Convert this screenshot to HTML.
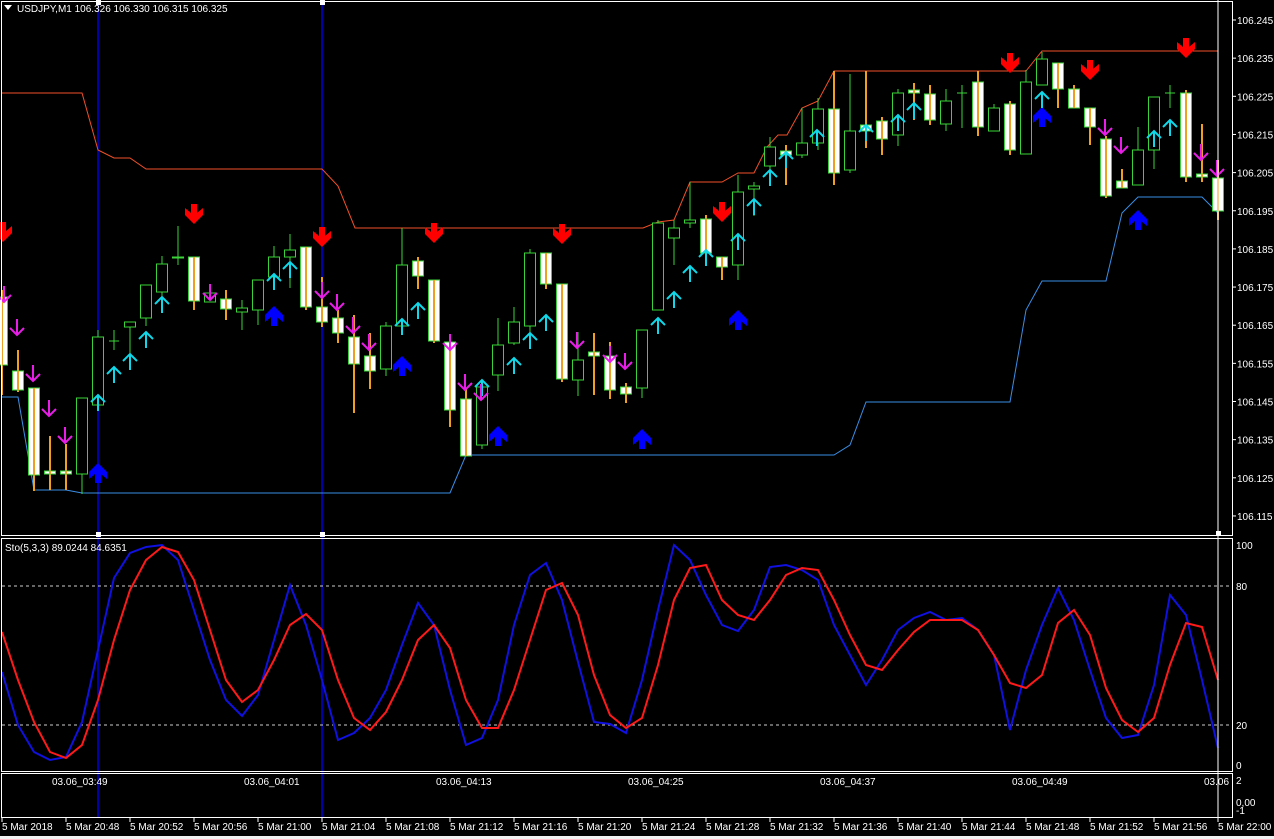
<!DOCTYPE html>
<html><head><meta charset="utf-8"><style>
html,body{margin:0;padding:0;background:#000;width:1274px;height:839px;overflow:hidden}
svg{display:block}
text{font-family:"Liberation Sans",sans-serif;font-size:10px;fill:#fff}
</style></head><body>
<svg id="s" width="1274" height="839" viewBox="0 0 1274 839" xmlns="http://www.w3.org/2000/svg">
<rect width="1274" height="839" fill="#000"/>
<rect x="0" y="836" width="1274" height="3" fill="#f0f0f0"/>
<g id="g"></g>
<text x="17" y="12">USDJPY,M1  106.326 106.330 106.315 106.325</text>
<path d="M4 5 L12 5 L8 10 Z" fill="#fff"/>
<text x="5" y="551">Sto(5,3,3) 89.0244 84.6351</text>
</svg>
<script>
var g=document.getElementById('g'),h='';
function L(pts,c,w){h+='<polyline points="'+pts.map(function(p){return p.join(',')}).join(' ')+'" fill="none" stroke="'+c+'" stroke-width="'+(w||1)+'"/>';}
h+='<line x1="98" y1="0" x2="98" y2="817" stroke="#0000ff" stroke-width="1.3"/><line x1="322" y1="0" x2="322" y2="817" stroke="#0000ff" stroke-width="1.3"/>';
L([[2,93],[82,93],[98,150],[114,158],[130,158],[146,169],[322,169],[338,186],[355,228],[643,228],[658,222],[674,220],[690,182],[722,182],[738,173],[754,173],[767,147],[778,135],[787,135],[802,108],[818,101],[834,71],[1026,71],[1042,51],[1218,51]],'#f05028');
L([[2,397],[18,397],[34,490],[66,490],[82,493],[450,493],[466,455],[834,455],[850,445],[866,402],[1010,402],[1026,310],[1042,281],[1106,281],[1122,213],[1138,197],[1202,197],[1218,213]],'#3a8ee6');
var C=[[297,365,290,395],[371,390,350,392],[388,475,388,491],[471,474,436,490],[471,474,444,490],[474,398,398,494],[405,337,330,410],[341,341,330,350],[327,322,322,360],[318,285,285,326],[292,264,256,300],[258,257,226,265],[257,301,257,310],[302,293,285,302],[299,309,290,320],[312,308,300,330],[310,280,280,325],[277,257,246,288],[257,250,234,288],[247,307,247,310],[307,322,277,327],[318,333,310,343],[337,364,315,413],[356,371,333,389],[369,326,322,376],[326,265,228,335],[261,276,257,289],[280,341,280,343],[342,410,342,427],[399,456,389,456],[445,387,383,449],[375,345,318,391],[343,322,307,345],[326,253,249,345],[253,284,253,289],[284,379,284,382],[380,360,332,396],[352,356,333,395],[356,390,342,399],[387,394,383,403],[388,330,330,398],[310,223,220,310],[238,228,220,265],[223,220,182,228],[219,253,215,255],[257,267,257,280],[265,192,175,280],[189,186,182,216],[166,147,137,170],[151,155,145,185],[155,143,108,158],[143,109,98,150],[109,173,71,185],[170,131,74,173],[125,131,71,148],[121,139,117,155],[135,93,89,146],[90,93,83,120],[94,120,85,125],[124,101,89,131],[93,93,85,128],[82,127,71,136],[131,108,104,131],[104,150,101,155],[154,82,70,154],[85,59,52,85],[63,89,63,108],[89,108,85,108],[108,127,108,145],[139,196,136,198],[181,188,169,188],[185,150,127,185],[150,97,97,169],[93,93,85,108],[93,177,90,182],[174,177,124,182],[178,211,160,220]];
C.forEach(function(c,k){var x=2+16*k,o=c[0],cl=c[1],hi=c[2],lo=c[3];var t=Math.min(o,cl),b=Math.max(o,cl);
 var bear=cl>o;
 if(bear){h+='<line x1="'+x+'" y1="'+hi+'" x2="'+x+'" y2="'+lo+'" stroke="#f0a020" stroke-width="2"/>';
  h+='<rect x="'+(x-5.5)+'" y="'+t+'" width="11" height="'+Math.max(b-t,2)+'" fill="#fff" stroke="#3ad43a" stroke-width="1"/>';
  h+='<line x1="'+x+'" y1="'+t+'" x2="'+x+'" y2="'+b+'" stroke="#f0a020" stroke-width="2"/>';}
 else{h+='<line x1="'+x+'" y1="'+hi+'" x2="'+x+'" y2="'+lo+'" stroke="#3ad43a" stroke-width="1"/>';
  if(b-t<1)h+='<line x1="'+(x-5)+'" y1="'+t+'" x2="'+(x+5)+'" y2="'+t+'" stroke="#3ad43a"/>';
  else h+='<rect x="'+(x-5.5)+'" y="'+t+'" width="11" height="'+(b-t)+'" fill="#000" stroke="#3ad43a" stroke-width="1"/>';}
});
function bigDown(x,y){h+='<path d="M'+(x-3)+' '+y+'L'+(x+3)+' '+y+'L'+(x+3)+' '+(y+9)+'L'+(x+9)+' '+(y+4)+'L'+(x+9)+' '+(y+11)+'L'+x+' '+(y+20)+'L'+(x-9)+' '+(y+11)+'L'+(x-9)+' '+(y+4)+'L'+(x-3)+' '+(y+9)+'Z" fill="#ff0000"/>';}
function bigUp(x,y){h+='<path d="M'+(x-3)+' '+(y+20)+'L'+(x+3)+' '+(y+20)+'L'+(x+3)+' '+(y+11)+'L'+(x+9)+' '+(y+16)+'L'+(x+9)+' '+(y+9)+'L'+x+' '+y+'L'+(x-9)+' '+(y+9)+'L'+(x-9)+' '+(y+16)+'L'+(x-3)+' '+(y+11)+'Z" fill="#0000ff"/>';}
[[3,222],[194,204],[322,227],[434,223],[562,224],[722,202],[1010,53],[1090,60],[1186,38]].forEach(function(p){bigDown(p[0],p[1]);});
[[98,463],[274,306],[402,356],[498,426],[642,429],[738,310],[1042,107],[1138,210]].forEach(function(p){bigUp(p[0],p[1]);});
function sUp(x,y){h+='<path d="M'+x+' '+(y+8)+'L'+x+' '+(y-8)+'M'+(x-7)+' '+(y-1)+'L'+x+' '+(y-8)+'L'+(x+7)+' '+(y-1)+'" fill="none" stroke="#10d8e8" stroke-width="2"/>';}
function sDn(x,y){h+='<path d="M'+x+' '+(y-8)+'L'+x+' '+(y+8)+'M'+(x-7)+' '+(y+1)+'L'+x+' '+(y+8)+'L'+(x+7)+' '+(y+1)+'" fill="none" stroke="#e81ee8" stroke-width="2"/>';}
[[98,403],[114,375],[130,362],[146,340],[162,305],[274,282],[290,270],[402,327],[418,311],[482,388],[514,366],[530,341],[546,323],[658,326],[674,300],[690,274],[706,258],[738,242],[754,207],[770,178],[786,160],[817,138],[866,133],[898,123],[914,111],[1042,100],[1154,139],[1170,128]].forEach(function(p){sUp(p[0],p[1]);});
[[4,294],[17,327],[33,373],[49,408],[65,435],[210,292],[322,290],[337,302],[353,325],[369,342],[450,342],[465,382],[481,392],[577,340],[610,354],[625,361],[1105,127],[1121,145],[1201,152],[1217,168]].forEach(function(p){sDn(p[0],p[1]);});
h+='<line x1="2" y1="586" x2="1232" y2="586" stroke="#ccc" stroke-dasharray="3,3"/><line x1="2" y1="725" x2="1232" y2="725" stroke="#ccc" stroke-dasharray="3,3"/>';
var B=[672,725,752,760,757,722,650,578,553,547,545,560,610,660,700,716,695,640,585,625,680,740,733,718,690,645,603,625,690,745,738,700,625,575,563,600,662,722,724,733,680,610,545,560,595,625,631,610,567,565,570,580,625,655,685,660,630,618,612,620,618,630,655,730,670,625,588,620,670,718,738,735,685,595,615,680,748];
var R=[632,680,722,752,758,745,700,640,590,560,547,552,580,630,680,702,690,660,625,614,630,680,718,730,712,680,640,625,648,700,728,728,690,640,590,583,615,675,715,728,718,665,600,568,565,600,615,620,600,575,568,570,600,635,665,670,650,632,620,620,620,630,655,683,688,675,623,610,635,688,720,732,718,665,623,627,680];
L(B.map(function(v,k){return [2+16*k,v]}),'#1010e0',2);
L(R.map(function(v,k){return [2+16*k,v]}),'#ff1a1a',2);
h+='<rect x="1.5" y="1.5" width="1231" height="534" fill="none" stroke="#fff"/>';
h+='<rect x="1.5" y="538.5" width="1231" height="233" fill="none" stroke="#fff"/>';
h+='<rect x="1.5" y="773.5" width="1231" height="44" fill="none" stroke="#fff"/>';
h+='<line x1="1218" y1="0" x2="1218" y2="817" stroke="#fff"/>';
h+='<rect x="96" y="0" width="5" height="5" fill="#fff"/><rect x="320" y="0" width="5" height="5" fill="#fff"/><rect x="96" y="532" width="5" height="5" fill="#fff"/><rect x="320" y="532" width="5" height="5" fill="#fff"/><rect x="1216" y="531" width="5" height="5" fill="#fff"/>';
for(var i=0;i<14;i++){var y=20+i*38.15;var p=(106.245-i*0.01).toFixed(3);h+='<line x1="1233" y1="'+y+'" x2="1236" y2="'+y+'" stroke="#fff"/><text x="1237" y="'+(y+4)+'">'+p+'</text>';}
[[100,545],[80,586],[20,725],[0,765]].forEach(function(a){h+='<text x="1236" y="'+(a[1]+4)+'">'+a[0]+'</text>';});
h+='<text x="1236" y="784">2</text><text x="1236" y="806">0,00</text><text x="1236" y="814">-1</text>';
['03:49','04:01','04:13','04:25','04:37','04:49'].forEach(function(t,i){h+='<text x="'+(52+192*i)+'" y="785">03.06_'+t+'</text>';});
h+='<text x="1204" y="785">03.06</text>';
var tl=['20:48','20:52','20:56','21:00','21:04','21:08','21:12','21:16','21:20','21:24','21:28','21:32','21:36','21:40','21:44','21:48','21:52','21:56','22:00'];
h+='<text x="2" y="830">5 Mar 2018</text><line x1="2" y1="818" x2="2" y2="822" stroke="#fff"/>';
tl.forEach(function(t,i){var x=66+64*i;h+='<line x1="'+x+'" y1="818" x2="'+x+'" y2="822" stroke="#fff"/><text x="'+x+'" y="830">5 Mar '+t+'</text>';});
g.innerHTML=h;
</script>
</body></html>
